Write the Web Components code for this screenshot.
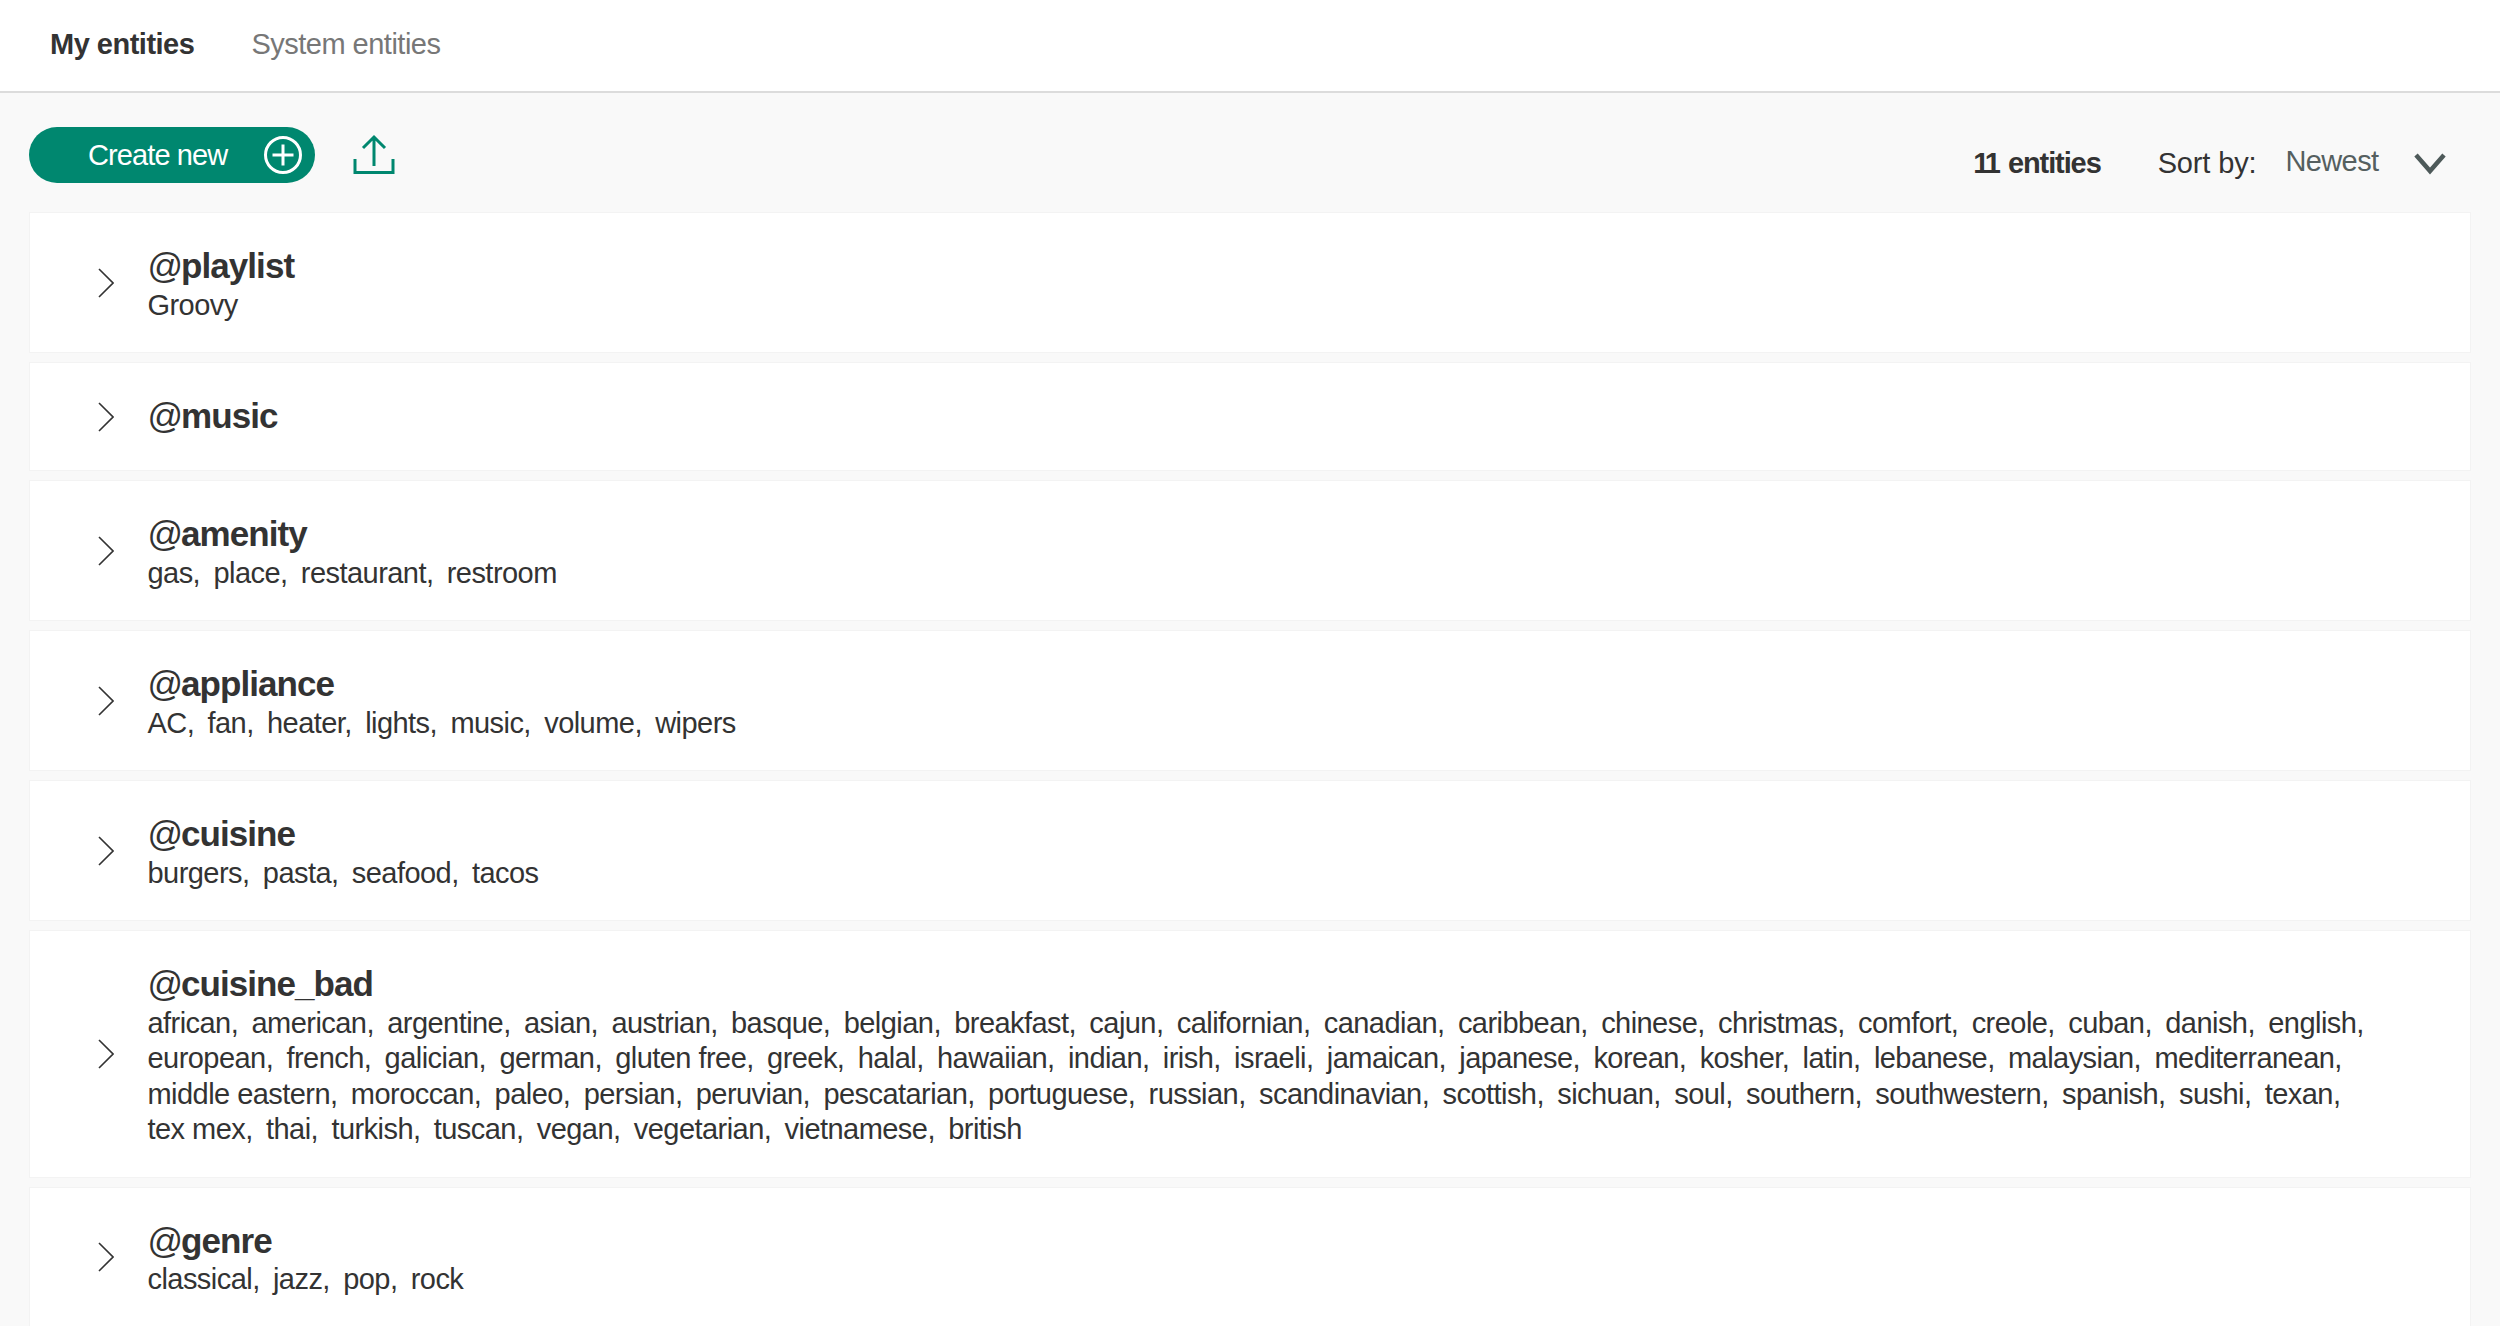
<!DOCTYPE html>
<html><head><meta charset="utf-8">
<style>
html,body{margin:0;padding:0;height:1326px;overflow:hidden;background:#f9f9f9;font-family:"Liberation Sans",Arial,sans-serif;color:#333}
</style></head><body>
<entity-app></entity-app>
<script>
const ICON_PLUS=`<svg width="40" height="40" viewBox="0 0 40 40" fill="none" stroke="#fff" stroke-width="3"><circle cx="20" cy="20" r="17.5"/><path d="M20 9.500V30.500M9.500 20H30.500"/></svg>`;
const ICON_UP=`<svg width="42" height="42" viewBox="0 0 42 42" fill="none" stroke="#00876f" stroke-width="3"><path d="M2 25V38.500H40V25M21 32V3M10 14L21 3L32 14"/></svg>`;
class EntityTabs extends HTMLElement{constructor(){super();this.attachShadow({mode:'open'}).innerHTML=`<style>
:host{display:flex;box-sizing:content-box;background:#fff;border-bottom:2px solid #dcdcdc;padding:0 0 3px 50px;height:88px;gap:57px;align-items:center;font-size:29px;letter-spacing:-.5px}
b{color:#333}span{color:#777}
</style><b>My entities</b><span>System entities</span>`}}
class EntityToolbar extends HTMLElement{constructor(){super();this.attachShadow({mode:'open'}).innerHTML=`<style>
:host{display:flex;align-items:flex-start;padding:34px 53.500px 0 29px;height:86px;box-sizing:content-box}
.btn{display:flex;align-items:center;width:286px;height:56px;box-sizing:border-box;background:#00876f;border-radius:28px;color:#fff;font-size:29px;letter-spacing:-.9px;padding-left:59px}
.btn svg{margin-left:auto;margin-right:12.500px;display:block}
.up{margin-left:37.500px;margin-top:7px;display:block;height:42px}
.r{margin-left:auto;display:flex;align-items:baseline;font-size:29px;letter-spacing:-.6px;padding-top:20px}
b{color:#333;letter-spacing:-1.100px}b i{font-style:normal;letter-spacing:-3px;margin-right:3px}.s{margin-left:57px;letter-spacing:-.15px}.n{margin-left:29px;color:#555f5f;position:relative;top:-2px}
.c{margin-left:34px;align-self:center;display:block}
</style><div class="btn"><span>Create new</span>${ICON_PLUS}</div><span class="up">${ICON_UP}</span>
<div class="r"><b><i>11</i> entities</b><span class="s">Sort by:</span><span class="n">Newest</span>
<svg class="c" width="34" height="22" viewBox="0 0 34 22" fill="none" stroke="#4e5a5a" stroke-width="4.500"><path d="M3 2L17 18L31 2"/></svg></div>`}}
class EntityCard extends HTMLElement{constructor(){super();this.attachShadow({mode:'open'}).innerHTML=`<style>
:host{display:flex;align-items:center;background:#fff;margin:0 30px 11px;box-shadow:0 0 0 1px #f3f3f3;min-height:107px;box-sizing:border-box;padding:32px 70px 29px 0}
:host([empty]){padding:30px 70px 30px 0}
svg{flex:none;margin:-3px 0 0 68px;display:block}
:host([empty]) svg{margin-top:0}
.t{margin-left:33.500px;flex:1;min-width:0}
h3{margin:0;font-size:35px;line-height:42.500px;font-weight:700;letter-spacing:-.95px;color:#333}
h3 i{font-style:normal;font-weight:400;margin-right:-1px}
.v{font-size:29px;line-height:35.500px;letter-spacing:-.55px;color:#333}
</style><svg width="16" height="30" viewBox="0 0 16 30" fill="none" stroke="#333" stroke-width="1.600"><path d="M1 1L15 15L1 29"/></svg><div class="t"><h3><i>@</i><slot name="name"></slot></h3><div class="v"><slot></slot></div></div>`}}
class EntityItem extends HTMLElement{constructor(){super();this.attachShadow({mode:'open'}).innerHTML=`<style>:host{display:inline-block;margin-right:5.800px;white-space:nowrap}</style><slot></slot>`}}
const data=[["playlist",["Groovy"]],["music",[]],["amenity",["gas","place","restaurant","restroom"]],["appliance",["AC","fan","heater","lights","music","volume","wipers"]],["cuisine",["burgers","pasta","seafood","tacos"]],["cuisine_bad","african american argentine asian austrian basque belgian breakfast cajun californian canadian caribbean chinese christmas comfort creole cuban danish english european french galician german gluten_free greek halal hawaiian indian irish israeli jamaican japanese korean kosher latin lebanese malaysian mediterranean middle_eastern moroccan paleo persian peruvian pescatarian portuguese russian scandinavian scottish sichuan soul southern southwestern spanish sushi texan tex_mex thai turkish tuscan vegan vegetarian vietnamese british".split(" ").map(s=>s.replace("_"," "))],["genre",["classical","jazz","pop","rock"]]];
class EntityApp extends HTMLElement{constructor(){super();const r=this.attachShadow({mode:'open'});
r.innerHTML=`<style>:host{display:block}</style><entity-tabs></entity-tabs><entity-toolbar></entity-toolbar>`+data.map(d=>{const n=d[1].length;return `<entity-card${n?'':' empty'}><span slot="name">${d[0]}</span>${d[1].map((x,i)=>`<entity-item>${x}${(i<n-1)?',':''}</entity-item> `).join('')}</entity-card>`}).join('')}}
customElements.define('entity-tabs',EntityTabs);customElements.define('entity-toolbar',EntityToolbar);customElements.define('entity-card',EntityCard);customElements.define('entity-item',EntityItem);customElements.define('entity-app',EntityApp);
</script></body></html>
